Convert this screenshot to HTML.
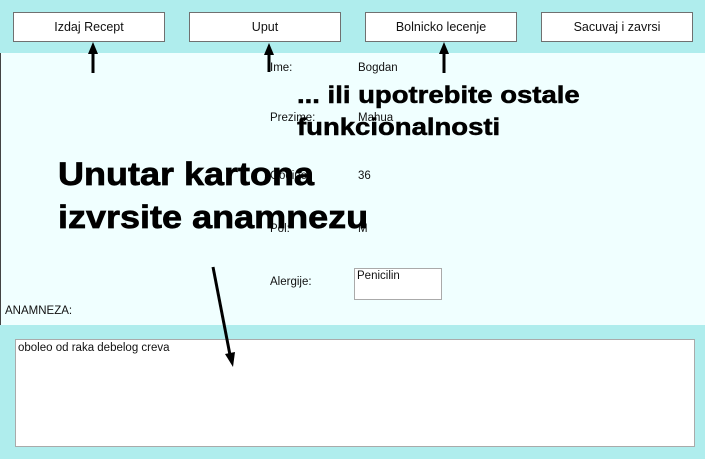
<!DOCTYPE html>
<html><head><style>
body{margin:0;width:705px;height:459px;position:relative;overflow:hidden;font-family:"Liberation Sans",sans-serif;background:#f0ffff}
.top{position:absolute;left:0;top:0;width:705px;height:53px;background:#afeded}
.bot{position:absolute;left:0;top:325px;width:705px;height:134px;background:#afeded}
.btn{position:absolute;top:12px;width:150px;height:28px;background:#fff;border:1px solid #707070;font-size:12.5px;text-align:center;line-height:28px;color:#111}
.t{position:absolute;font-size:11.5px;color:#111}
.big{position:absolute;font-weight:bold;color:#000;font-size:36px;line-height:40px;white-space:nowrap;transform:scaleY(0.9);transform-origin:left center;-webkit-text-stroke:0.8px #000}
.med{position:absolute;font-weight:bold;color:#000;font-size:27.5px;line-height:30px;white-space:nowrap;transform:scaleY(0.88);transform-origin:left center;-webkit-text-stroke:0.6px #000}
</style></head><body>
<div class="top"></div>
<div style="position:absolute;left:0;top:53px;width:1px;height:272px;background:#444"></div>
<div class="bot"></div>
<div class="btn" style="left:13px">Izdaj Recept</div>
<div class="btn" style="left:189px">Uput</div>
<div class="btn" style="left:365px">Bolnicko lecenje</div>
<div class="btn" style="left:541px">Sacuvaj i zavrsi</div>
<div class="t" style="left:270px;top:62px">Ime:</div>
<div class="t" style="left:358px;top:62px">Bogdan</div>
<div class="t" style="left:270px;top:112px">Prezime:</div>
<div class="t" style="left:358px;top:112px">Mahua</div>
<div class="t" style="left:270px;top:170px">Godine:</div>
<div class="t" style="left:358px;top:170px">36</div>
<div class="t" style="left:270px;top:223px">Pol:</div>
<div class="t" style="left:358px;top:223px">M</div>
<div class="t" style="left:270px;top:276px">Alergije:</div>
<div style="position:absolute;left:354px;top:268px;width:86px;height:30px;border:1px solid #aaa;background:#fff"></div>
<div class="t" style="left:357px;top:270px">Penicilin</div>
<div class="t" style="left:5px;top:305px">ANAMNEZA:</div>
<div style="position:absolute;left:15px;top:339px;width:678px;height:106px;border:1px solid #aaa;background:#fff"></div>
<div class="t" style="left:18px;top:342px">oboleo od raka debelog creva</div>
<div class="big" style="left:58px;top:154px">Unutar kartona</div>
<div class="big" style="left:58px;top:197px">izvrsite anamnezu</div>
<div class="med" style="left:297px;top:80px">... ili upotrebite ostale</div>
<div class="med" style="left:297px;top:112px">funkcionalnosti</div>
<svg width="705" height="459" style="position:absolute;left:0;top:0">
<g stroke="#000" stroke-width="3" fill="#000">
<line x1="93" y1="73" x2="93" y2="52"/><polygon points="88,54 98,54 93,42" stroke="none"/>
<line x1="269" y1="72" x2="269" y2="53"/><polygon points="264,55 274,55 269,43" stroke="none"/>
<line x1="444" y1="73" x2="444" y2="52"/><polygon points="439,54 449,54 444,42" stroke="none"/>
<line x1="213" y1="267" x2="230" y2="355"/><polygon points="225,354 235,352 233,367" stroke="none"/>
</g></svg>
</body></html>
